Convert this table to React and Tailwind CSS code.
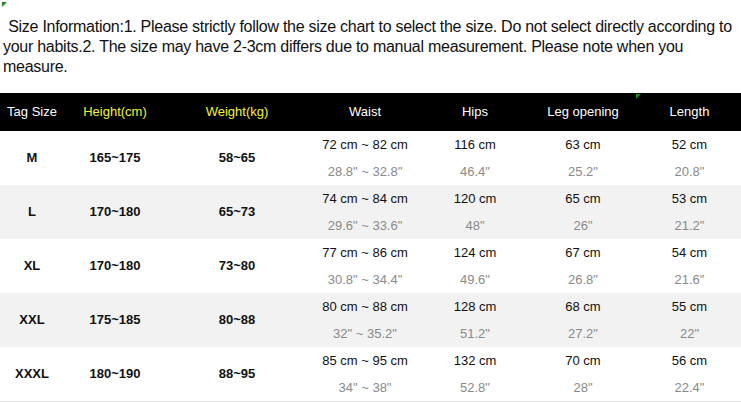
import React from 'react'

const rows = [
  { size: 'M', height: '165~175', weight: '58~65', waist: ['72 cm ~ 82 cm', '28.8" ~ 32.8"'], hips: ['116 cm', '46.4"'], leg: ['63 cm', '25.2"'], length: ['52 cm', '20.8"'] },
  { size: 'L', height: '170~180', weight: '65~73', waist: ['74 cm ~ 84 cm', '29.6" ~ 33.6"'], hips: ['120 cm', '48"'], leg: ['65 cm', '26"'], length: ['53 cm', '21.2"'] },
  { size: 'XL', height: '170~180', weight: '73~80', waist: ['77 cm ~ 86 cm', '30.8" ~ 34.4"'], hips: ['124 cm', '49.6"'], leg: ['67 cm', '26.8"'], length: ['54 cm', '21.6"'] },
  { size: 'XXL', height: '175~185', weight: '80~88', waist: ['80 cm ~ 88 cm', '32" ~ 35.2"'], hips: ['128 cm', '51.2"'], leg: ['68 cm', '27.2"'], length: ['55 cm', '22"'] },
  { size: 'XXXL', height: '180~190', weight: '88~95', waist: ['85 cm ~ 95 cm', '34" ~ 38"'], hips: ['132 cm', '52.8"'], leg: ['70 cm', '28"'], length: ['56 cm', '22.4"'] },
]

const cols = 'grid grid-cols-[64px_102px_142px_114px_106px_110px_1fr]'

// two line cell: cm on top, inches below in grey
const Measure = ({ value }) => (
  <div className="flex flex-col items-center">
    <span className="h-[27px] leading-[27px] text-[#111]">{value[0]}</span>
    <span className="h-[27px] leading-[27px] text-[#8a8a8a]">{value[1]}</span>
  </div>
)

export default function App() {
  return (
    <div className="relative w-[741px] h-[403px] bg-white overflow-hidden text-[13px] font-['Liberation_Sans',Arial,sans-serif]">
      <span className="absolute left-[2px] top-[2px] w-0 h-0 border-t-[5px] border-r-[5px] border-t-[#1f8a1f] border-r-transparent" />
      <span className="absolute left-[636px] top-[94px] w-0 h-0 border-t-[5px] border-r-[5px] border-t-[#1f8a1f] border-r-transparent" />

      <div className="h-[93px] pt-[17px] text-[16px] leading-[20px] text-[#111] tracking-[-0.27px]">
        <div className="whitespace-nowrap pl-[4px]">&nbsp;Size Information:1. Please strictly follow the size chart to select the size. Do not select directly according to</div>
        <div className="whitespace-nowrap pl-[3px]">your habits.2. The size may have 2-3cm differs due to manual measurement. Please note when you</div>
        <div className="whitespace-nowrap pl-[3px]">measure.</div>
      </div>

      <div className={`${cols} h-[38px] bg-black items-center text-center`}>
        <span className="text-white">Tag Size</span>
        <span className="text-[#f2f23a]">Height(cm)</span>
        <span className="text-[#f2f23a]">Weight(kg)</span>
        <span className="text-white">Waist</span>
        <span className="text-white">Hips</span>
        <span className="text-white">Leg opening</span>
        <span className="text-white">Length</span>
      </div>

      {rows.map((r, i) => (
        <div key={r.size} className={`${cols} h-[54px] items-center text-center ${i % 2 ? 'bg-[#f2f2f2]' : 'bg-white'}`}>
          <span className="font-bold text-[#111]">{r.size}</span>
          <span className="font-bold text-[#111]">{r.height}</span>
          <span className="font-bold text-[#111]">{r.weight}</span>
          <Measure value={r.waist} />
          <Measure value={r.hips} />
          <Measure value={r.leg} />
          <Measure value={r.length} />
        </div>
      ))}
      <div className="h-px bg-[#e6e6e6]" />
    </div>
  )
}
